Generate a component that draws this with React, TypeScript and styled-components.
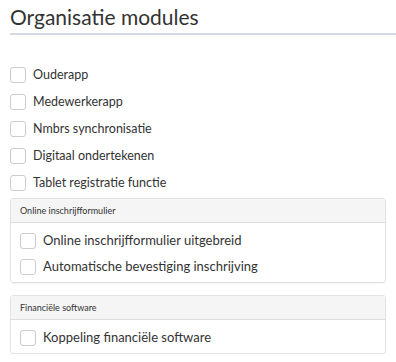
import React from "react";
import styled, { createGlobalStyle } from "styled-components";

const GlobalStyle = createGlobalStyle`
  body {
    margin: 0;
    background: #fff;
    font-family: "Lato", "Open Sans", sans-serif;
    color: #333;
  }
`;

const Page = styled.div`
  padding: 3px 10px 0 10px;
`;

const Title = styled.h2`
  margin: 0 -10px 0 0;
  font-size: 21px;
  font-weight: 400;
  line-height: 28px;
  color: #333;
  padding-bottom: 2px;
  border-bottom: 2px solid #d3d8e2;
`;

const List = styled.div`
  display: flex;
  flex-direction: column;
  padding-top: 31px;
  gap: 10px;
`;

const Row = styled.label<{ $size?: number }>`
  display: flex;
  align-items: center;
  gap: 7px;
  font-size: ${(p) => p.$size || 12.5}px;
  line-height: 17px;
  color: #333;
`;

const Box = styled.span`
  width: 14px;
  height: 14px;
  border: 1px solid #ccc;
  border-radius: 3px;
  background: #fff;
  flex: none;
`;

const Panel = styled.div`
  border: 1px solid #e3e3e3;
  border-radius: 3px;
  box-shadow: 0 1px 1px rgba(0, 0, 0, 0.04);
`;

const PanelHeader = styled.div`
  background: #f5f5f5;
  border-bottom: 1px solid #ddd;
  font-size: 9px;
  line-height: 23px;
  padding: 0 9px;
  color: #333;
`;

const PanelBody = styled.div`
  display: flex;
  flex-direction: column;
  gap: 9px;
  padding: 9px 9px 7px 9px;
`;

const Section = styled.div`
  display: flex;
  flex-direction: column;
  gap: 12px;
  padding-top: 7px;
`;

const Check: React.FC<{ label: string; size?: number }> = ({ label, size }) => (
  <Row $size={size}>
    <Box />
    {label}
  </Row>
);

export default function App() {
  return (
    <>
      <GlobalStyle />
      <Page>
        <Title>Organisatie modules</Title>
        <List>
          <Check label="Ouderapp" />
          <Check label="Medewerkerapp" />
          <Check label="Nmbrs synchronisatie" />
          <Check label="Digitaal ondertekenen" />
          <Check label="Tablet registratie functie" />
        </List>
        <Section>
          <Panel>
            <PanelHeader>Online inschrijfformulier</PanelHeader>
            <PanelBody>
              <Check label="Online inschrijfformulier uitgebreid" size={13} />
              <Check label="Automatische bevestiging inschrijving" size={13} />
            </PanelBody>
          </Panel>
          <Panel>
            <PanelHeader>Financiële software</PanelHeader>
            <PanelBody>
              <Check label="Koppeling financiële software" size={13} />
            </PanelBody>
          </Panel>
        </Section>
      </Page>
    </>
  );
}
